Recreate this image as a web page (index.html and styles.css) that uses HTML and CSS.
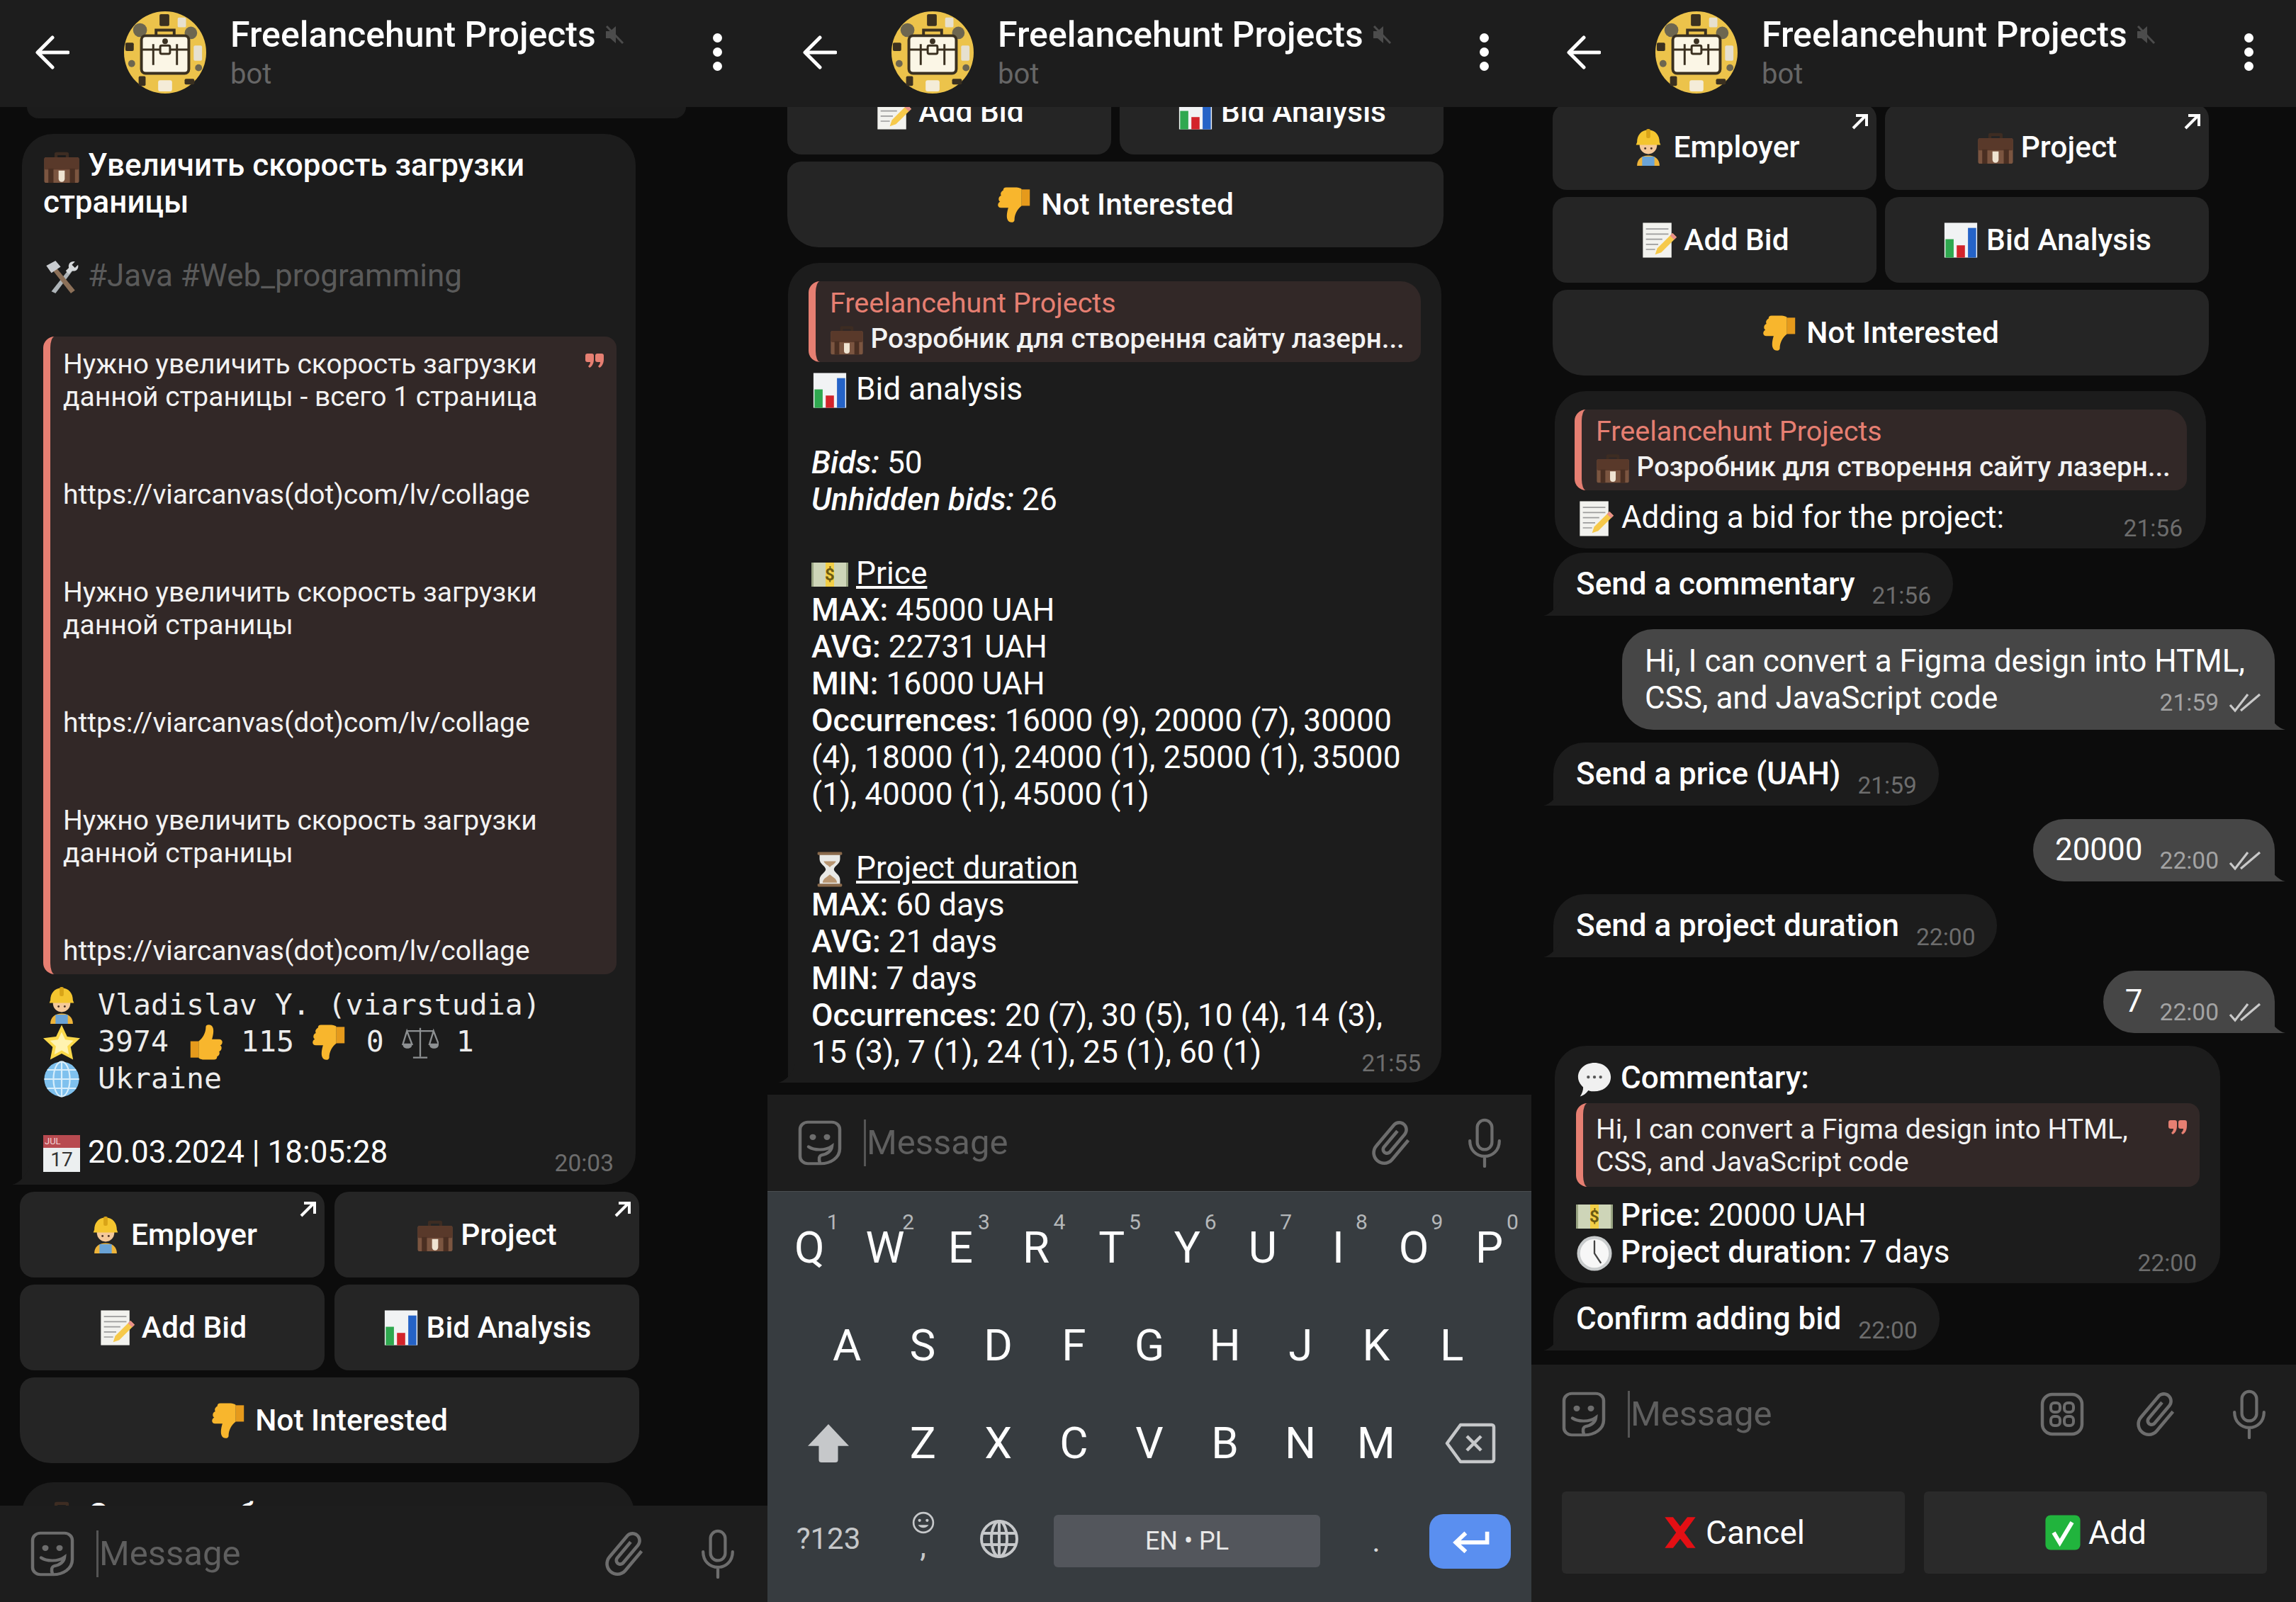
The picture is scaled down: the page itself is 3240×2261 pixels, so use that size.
FILE: index.html
```html
<!DOCTYPE html>
<html lang="en">
<head>
  <meta charset="UTF-8">
  <title>Freelancehunt Projects bot</title>
  <link rel="stylesheet" href="styles.css">
</head>
<body>
  <!-- shared emoji and icons -->
  <svg class="defs" aria-hidden="true">
    <symbol id="e-case" viewBox="0 0 36 36">
      <path d="M11 10V6a2 2 0 0 1 2-2h10a2 2 0 0 1 2 2v4h-3V7h-8v3z" fill="#3d2c22"/>
      <rect x="1" y="9" width="34" height="25" rx="2" fill="#7b5540"/>
      <rect x="1" y="9" width="34" height="12" rx="2" fill="#59392a"/>
      <rect x="5" y="20" width="5" height="14" fill="#4a2f22"/>
      <rect x="26" y="20" width="5" height="14" fill="#4a2f22"/>
      <path d="M15 22h6v8a3 3 0 0 1-6 0z" fill="#efe4d2"/>
    </symbol>
    <symbol id="e-worker" viewBox="0 0 36 36">
      <path d="M7 36c0-6 4-10 11-10s11 4 11 10z" fill="#eeb43a"/>
      <path d="M12 27h12v9H12z" fill="#6aa3d6"/>
      <circle cx="18" cy="16" r="8.500" fill="#f5c99a"/>
      <path d="M7 13c0-7 4-12 11-12s11 5 11 12l1 2.500H6z" fill="#f4c52f"/>
      <rect x="16" y="0" width="4" height="9" rx="1.500" fill="#d9a418"/>
      <circle cx="15" cy="19" r="1" fill="#4b3325"/><circle cx="21" cy="19" r="1" fill="#4b3325"/>
    </symbol>
    <symbol id="e-tools" viewBox="0 0 36 36">
      <path d="M8 32 27 8l3 2L12 34z" fill="#aeb4b8"/>
      <path d="M31 3c-4-1-7 2-6 6l-3 3 3 3 3-3c4 1 7-2 6-6l-3 3-3-3z" fill="#d5d8da"/>
      <path d="M27 34 9 11l3-3 19 23z" fill="#8c7058"/>
      <path d="M3 7l9-5 5 6-9 6z" fill="#c9ccd0"/>
    </symbol>
    <symbol id="e-star" viewBox="0 0 36 36">
      <path d="M18 1l5.400 11.400L36 14l-9.200 8.600L29.200 35 18 29l-11.200 6 2.400-12.400L0 14l12.600-1.600z" fill="#fbd94a"/>
      <path d="M18 8l3.500 7.400 8 1-5.900 5.600 1.500 8L18 26l-7.100 4 1.500-8-5.900-5.600 8-1z" fill="#fff3b0"/>
    </symbol>
    <symbol id="e-up" viewBox="0 0 36 36">
      <path d="M4 17h8v16H4z" fill="#e59a1c"/>
      <path d="M12 17c4-3 7-8 7-14 0-3 6-3 7 1 1 3 0 8-1 11h7c4 0 4 5 1 6 2 1 2 5-1 6 1 2 0 4-2 5 0 2-1 3-3 3H18c-3 0-6-1-6-2z" fill="#f8b62d"/>
    </symbol>
    <symbol id="e-down" viewBox="0 0 36 36">
      <use href="#e-up" transform="rotate(180 18 18)" width="36" height="36"/>
    </symbol>
    <symbol id="e-scales" viewBox="0 0 36 36">
      <g fill="none" stroke="#8d9092" stroke-width="1.600">
        <path d="M18 4v28M11 33h14M5 7h26"/>
        <path d="M5 7 1 20h9zM31 7l-4 13h9z"/>
      </g>
      <path d="M1 20h9c0 3-2 4-4.500 4S1 23 1 20zM27 20h9c0 3-2 4-4.500 4S27 23 27 20z" fill="#8d9092"/>
    </symbol>
    <symbol id="e-globe" viewBox="0 0 36 36">
      <circle cx="18" cy="18" r="17" fill="#7fc1ee"/>
      <g fill="none" stroke="#d8eefb" stroke-width="1.500">
        <ellipse cx="18" cy="18" rx="8" ry="17"/>
        <path d="M18 1v34M1 18h34M4 9h28M4 27h28"/>
      </g>
    </symbol>
    <symbol id="e-memo" viewBox="0 0 36 36">
      <rect x="3" y="1" width="28" height="34" fill="#f2f2ee"/>
      <path d="M6 7h22M6 12h22M6 17h16M6 22h12M6 27h9" stroke="#9c9c9c" stroke-width="1.200"/>
      <path d="M32 11l4 4-15 15-6 2 2-6z" fill="#f6c94a"/>
      <path d="M32 11l4 4-2.500 2.500-4-4z" fill="#e88f8a"/>
    </symbol>
    <symbol id="e-chart" viewBox="0 0 36 36">
      <rect x="2" y="1" width="32" height="34" fill="#f1f3f4"/>
      <rect x="3" y="17" width="8" height="18" fill="#2fa84f"/>
      <rect x="14" y="23" width="8" height="12" fill="#d3242b"/>
      <rect x="25" y="6" width="8" height="29" fill="#2563c7"/>
    </symbol>
    <symbol id="e-glass" viewBox="0 0 36 36">
      <path d="M8 3h20v5c0 5-6 7-6 10s6 5 6 10v5H8v-5c0-5 6-7 6-10s-6-5-6-10z" fill="#e9e9e6"/>
      <path d="M11 31c0-4 5-6 7-8 2 2 7 4 7 8zM12 10h12c-1 3-5 4-6 6-1-2-5-3-6-6z" fill="#b89672"/>
      <rect x="6" y="1" width="24" height="3" rx="1" fill="#8a6a4c"/>
      <rect x="6" y="32" width="24" height="3" rx="1" fill="#8a6a4c"/>
    </symbol>
    <symbol id="e-speech" viewBox="0 0 36 36">
      <path d="M18 2c9 0 16 6 16 14s-7 14-16 14c-2 0-4 0-6-1-2 3-5 5-8 6 2-3 3-6 3-9-3-3-5-6-5-10C2 8 9 2 18 2z" fill="#f0f0f0"/>
      <circle cx="12" cy="16" r="1.500" fill="#555"/><circle cx="18" cy="16" r="1.500" fill="#555"/><circle cx="24" cy="16" r="1.500" fill="#555"/>
    </symbol>
    <symbol id="e-clock" viewBox="0 0 36 36">
      <circle cx="18" cy="18" r="17" fill="#c9cccd"/>
      <circle cx="18" cy="18" r="14" fill="#f7f7f7"/>
      <path d="M18 6v12l6 9" fill="none" stroke="#444" stroke-width="1.600" stroke-linecap="round"/>
    </symbol>
    <symbol id="e-cross" viewBox="0 0 36 36">
      <path d="M3 3h8l7 9 7-9h8L22 18l11 15h-8l-7-9-7 9H3l11-15z" fill="#e40f14"/>
    </symbol>
    <symbol id="e-check" viewBox="0 0 36 36">
      <rect x="1" y="1" width="34" height="34" rx="5" fill="#21b43d"/>
      <path d="M9 18l6 10L27 8" fill="none" stroke="#fff" stroke-width="4"/>
    </symbol>

    <symbol id="i-back" viewBox="0 0 48 48">
      <path d="M46 24H5M24 3 3 24l21 21" fill="none" stroke="currentColor" stroke-width="5" stroke-linecap="round" stroke-linejoin="round"/>
    </symbol>
    <symbol id="i-mute" viewBox="0 0 28 28">
      <path d="M2 9h6l8-7v24l-8-7H2z" fill="currentColor"/>
      <path d="M3 2l23 24" stroke="currentColor" stroke-width="3"/>
    </symbol>
    <symbol id="i-smile" viewBox="0 0 62 70" preserveAspectRatio="none">
      <path d="M14 3h34a11 11 0 0 1 11 11v30C59 58 46 67 32 67H14A11 11 0 0 1 3 56V14A11 11 0 0 1 14 3z" fill="none" stroke="currentColor" stroke-width="4.500"/>
      <circle cx="21" cy="26" r="4.500" fill="currentColor"/><circle cx="41" cy="26" r="4.500" fill="currentColor"/>
      <path d="M15 41c8 6 24 6 33-1-1 10-10 13-15 14-3 1-4 6-2 12" fill="none" stroke="currentColor" stroke-width="4.500" stroke-linecap="round"/>
    </symbol>
    <symbol id="i-clip" viewBox="1 1 22 22">
      <path transform="rotate(40 12 12)" d="M16.500 6v11.500c0 2.210-1.790 4-4 4s-4-1.790-4-4V5c0-1.380 1.120-2.500 2.500-2.500s2.500 1.120 2.500 2.500v10.500c0 .55-.45 1-1 1s-1-.45-1-1V6H10v9.500c0 1.380 1.120 2.500 2.500 2.500s2.500-1.120 2.500-2.500V5c0-2.210-1.790-4-4-4S7 2.790 7 5v12.500c0 3.040 2.460 5.500 5.500 5.500s5.500-2.460 5.500-5.500V6h-1.500z" fill="currentColor"/>
    </symbol>
    <symbol id="i-mic" viewBox="0 0 50 74">
      <rect x="14" y="3" width="22" height="44" rx="11" fill="none" stroke="currentColor" stroke-width="4.500"/>
      <path d="M3 34c0 14 10 23 22 23s22-9 22-23M25 57v15" fill="none" stroke="currentColor" stroke-width="4.500" stroke-linecap="round"/>
    </symbol>
    <symbol id="i-menu" viewBox="0 0 62 62">
      <rect x="3" y="3" width="56" height="56" rx="14" fill="none" stroke="currentColor" stroke-width="4.500"/>
      <rect x="15" y="15" width="13" height="13" rx="5" fill="none" stroke="currentColor" stroke-width="4"/>
      <rect x="34" y="15" width="13" height="13" rx="5" fill="none" stroke="currentColor" stroke-width="4"/>
      <rect x="15" y="34" width="13" height="13" rx="5" fill="none" stroke="currentColor" stroke-width="4"/>
      <rect x="34" y="34" width="13" height="13" rx="5" fill="none" stroke="currentColor" stroke-width="4"/>
    </symbol>
    <symbol id="i-ext" viewBox="0 0 24 24">
      <path d="M3 21 20 4M7 3h15v15" fill="none" stroke="currentColor" stroke-width="4"/>
    </symbol>
    <symbol id="i-ticks" viewBox="0 0 46 28">
      <path d="M2 17l7 8L27 2M17 25 44 2" fill="none" stroke="currentColor" stroke-width="3.200"/>
    </symbol>
    <symbol id="i-quote" viewBox="0 0 26 20">
      <path d="M3 0h6a3 3 0 0 1 3 3v5c0 5-2 10-6 12l-2-2c2-2 3-4 3-6H3a3 3 0 0 1-3-3V3a3 3 0 0 1 3-3zM17 0h6a3 3 0 0 1 3 3v5c0 5-2 10-6 12l-2-2c2-2 3-4 3-6h-4a3 3 0 0 1-3-3V3a3 3 0 0 1 3-3z" fill="currentColor"/>
    </symbol>
    <symbol id="i-shift" viewBox="0 0 60 56" preserveAspectRatio="none">
      <path d="M30 0 60 32H44v20a4 4 0 0 1-4 4H20a4 4 0 0 1-4-4V32H0z" fill="currentColor"/>
    </symbol>
    <symbol id="i-del" viewBox="0 0 72 58">
      <path d="M22 3h44a3 3 0 0 1 3 3v46a3 3 0 0 1-3 3H22L3 29z" fill="none" stroke="currentColor" stroke-width="4.500" stroke-linejoin="round"/>
      <path d="M31 19l20 20M51 19 31 39" stroke="currentColor" stroke-width="4.500"/>
    </symbol>
    <symbol id="i-globe" viewBox="0 0 56 56">
      <g fill="none" stroke="currentColor" stroke-width="4">
        <circle cx="28" cy="28" r="25"/><ellipse cx="28" cy="28" rx="11" ry="25"/>
        <path d="M28 3v50M4 20h48M4 36h48"/>
      </g>
    </symbol>
    <symbol id="i-emoji" viewBox="0 0 30 30">
      <circle cx="15" cy="15" r="13" fill="none" stroke="currentColor" stroke-width="2.500"/>
      <circle cx="10" cy="12" r="2" fill="currentColor"/><circle cx="20" cy="12" r="2" fill="currentColor"/>
      <path d="M8 18c3 5 11 5 14 0z" fill="currentColor"/>
    </symbol>
    <symbol id="i-enter" viewBox="0 0 54 36">
      <path d="M52 4v16H7M20 6 5 20l15 14" fill="none" stroke="currentColor" stroke-width="6"/>
    </symbol>
    <symbol id="i-logo" viewBox="0 0 120 120">
      <circle cx="60" cy="60" r="59" fill="#ecc34b"/>
      <g fill="#3a3020">
        <rect x="52" y="5" width="14" height="17" rx="2"/><rect x="78" y="10" width="12" height="14" rx="2" fill="#e6e0cf"/>
        <circle cx="24" cy="28" r="10" fill="#6d6650"/><circle cx="97" cy="32" r="9" fill="#6d6650"/>
        <rect x="3" y="46" width="12" height="12" rx="2"/><rect x="101" y="50" width="12" height="22" rx="2" fill="#e6e0cf"/>
        <circle cx="12" cy="76" r="5" fill="#6d6650"/><circle cx="108" cy="82" r="5" fill="#6d6650"/>
        <rect x="22" y="94" width="10" height="14" rx="2"/><rect x="88" y="98" width="14" height="8" rx="2"/>
        <rect x="50" y="100" width="20" height="16" rx="3" fill="#f4ecd8"/>
      </g>
      <path d="M47 36v-8h26v8" fill="none" stroke="#3a3020" stroke-width="4"/>
      <rect x="26" y="36" width="68" height="54" rx="6" fill="#fbf6e6" stroke="#3a3020" stroke-width="4"/>
      <path d="M26 56h68M43 48v30M77 48v30" fill="none" stroke="#3a3020" stroke-width="3"/>
      <rect x="53" y="50" width="14" height="12" rx="2" fill="#fbf6e6" stroke="#3a3020" stroke-width="3"/>
      <circle cx="60" cy="44" r="4" fill="#3a3020"/>
    </symbol>
  </svg>

  <div class="screens">

    <!-- left: project card -->
    <section class="phone">
      <header class="topbar">
        <svg class="back"><use href="#i-back"/></svg>
        <svg class="avatar"><use href="#i-logo"/></svg>
        <div class="who">
          <div class="name">Freelancehunt Projects <svg class="mute"><use href="#i-mute"/></svg></div>
          <div class="status">bot</div>
        </div>
        <div class="dots"><i></i><i></i><i></i></div>
      </header>

      <div class="chat chat-top">
        <div class="stub"></div>
        <div class="bubble card tail">
          <div class="line semi"><svg class="emo"><use href="#e-case"/></svg> Увеличить скорость загрузки<br>страницы</div>
          <div class="line blank"></div>
          <div class="line tags"><svg class="emo"><use href="#e-tools"/></svg> #Java #Web_programming</div>
          <div class="line blank"></div>
          <div class="quote quote-long"><svg class="q-mark"><use href="#i-quote"/></svg>Нужно увеличить скорость загрузки
данной страницы - всего 1 страница


https://viarcanvas(dot)com/lv/collage


Нужно увеличить скорость загрузки
данной страницы


https://viarcanvas(dot)com/lv/collage


Нужно увеличить скорость загрузки
данной страницы


https://viarcanvas(dot)com/lv/collage</div>
          <div class="mono">
            <div class="line"><svg class="emo"><use href="#e-worker"/></svg> Vladislav Y. (viarstudia)</div>
            <div class="line"><svg class="emo"><use href="#e-star"/></svg> 3974 <svg class="emo"><use href="#e-up"/></svg> 115 <svg class="emo"><use href="#e-down"/></svg> 0 <svg class="emo"><use href="#e-scales"/></svg> 1</div>
            <div class="line"><svg class="emo"><use href="#e-globe"/></svg> Ukraine</div>
          </div>
          <div class="line blank"></div>
          <div class="last-row">
            <div class="line"><span class="cal"><span class="cal-mon">JUL</span><span class="cal-day">17</span></span> 20.03.2024 | 18:05:28</div>
            <span class="time">20:03</span>
          </div>
        </div>
        <div class="keys keys-narrow">
          <div class="key"><svg class="emo"><use href="#e-worker"/></svg> Employer<svg class="ext"><use href="#i-ext"/></svg></div>
          <div class="key"><svg class="emo"><use href="#e-case"/></svg> Project<svg class="ext"><use href="#i-ext"/></svg></div>
          <div class="key"><svg class="emo"><use href="#e-memo"/></svg> Add Bid</div>
          <div class="key"><svg class="emo"><use href="#e-chart"/></svg> Bid Analysis</div>
          <div class="key key-wide"><svg class="emo"><use href="#e-down"/></svg> Not Interested</div>
        </div>
        <div class="bubble next"><div class="line semi"><svg class="emo"><use href="#e-case"/></svg> Создание бота заказать для</div></div>
      </div>

      <div class="composer">
        <div class="inputrow">
          <svg class="ic-smile"><use href="#i-smile"/></svg>
          <span class="caret"></span><span class="placeholder">Message</span>
          <svg class="ic-clip"><use href="#i-clip"/></svg>
          <svg class="ic-mic"><use href="#i-mic"/></svg>
        </div>
      </div>
    </section>

    <!-- middle: bid analysis with keyboard -->
    <section class="phone">
      <header class="topbar">
        <svg class="back"><use href="#i-back"/></svg>
        <svg class="avatar"><use href="#i-logo"/></svg>
        <div class="who">
          <div class="name">Freelancehunt Projects <svg class="mute"><use href="#i-mute"/></svg></div>
          <div class="status">bot</div>
        </div>
        <div class="dots"><i></i><i></i><i></i></div>
      </header>

      <div class="chat chat-mid">
        <div class="keys">
          <div class="key"><svg class="emo"><use href="#e-memo"/></svg> Add Bid</div>
          <div class="key"><svg class="emo"><use href="#e-chart"/></svg> Bid Analysis</div>
          <div class="key key-wide"><svg class="emo"><use href="#e-down"/></svg> Not Interested</div>
        </div>
        <div class="bubble analysis tail">
          <div class="reply">
            <div class="reply-from">Freelancehunt Projects</div>
            <div class="reply-text"><svg class="emo emo-sm"><use href="#e-case"/></svg> Розробник для створення сайту лазерн...</div>
          </div>
          <div class="stats">
            <div class="line"><svg class="emo"><use href="#e-chart"/></svg> Bid analysis</div>
            <div class="line blank"></div>
            <div class="line"><em>Bids:</em> 50</div>
            <div class="line"><em>Unhidden bids:</em> 26</div>
            <div class="line blank"></div>
            <div class="line"><span class="bill">$</span> <u>Price</u></div>
            <div class="line"><b>MAX:</b> 45000 UAH</div>
            <div class="line"><b>AVG:</b> 22731 UAH</div>
            <div class="line"><b>MIN:</b> 16000 UAH</div>
            <div class="line"><b>Occurrences:</b> 16000 (9), 20000 (7), 30000<br>(4), 18000 (1), 24000 (1), 25000 (1), 35000<br>(1), 40000 (1), 45000 (1)</div>
            <div class="line blank"></div>
            <div class="line"><svg class="emo"><use href="#e-glass"/></svg> <u>Project duration</u></div>
            <div class="line"><b>MAX:</b> 60 days</div>
            <div class="line"><b>AVG:</b> 21 days</div>
            <div class="line"><b>MIN:</b> 7 days</div>
            <div class="last-row">
              <div class="line line-over"><b>Occurrences:</b> 20 (7), 30 (5), 10 (4), 14 (3),<br>15 (3), 7 (1), 24 (1), 25 (1), 60 (1)</div>
              <span class="time">21:55</span>
            </div>
          </div>
        </div>
      </div>

      <div class="composer">
        <div class="inputrow">
          <svg class="ic-smile"><use href="#i-smile"/></svg>
          <span class="caret"></span><span class="placeholder">Message</span>
          <svg class="ic-clip"><use href="#i-clip"/></svg>
          <svg class="ic-mic"><use href="#i-mic"/></svg>
        </div>
      </div>

      <div class="keyboard">
        <div class="kb-row">
          <span class="kb-key">Q<sup>1</sup></span><span class="kb-key">W<sup>2</sup></span><span class="kb-key">E<sup>3</sup></span><span class="kb-key">R<sup>4</sup></span><span class="kb-key">T<sup>5</sup></span><span class="kb-key">Y<sup>6</sup></span><span class="kb-key">U<sup>7</sup></span><span class="kb-key">I<sup>8</sup></span><span class="kb-key">O<sup>9</sup></span><span class="kb-key">P<sup>0</sup></span>
        </div>
        <div class="kb-row kb-row-home">
          <span class="kb-key">A</span><span class="kb-key">S</span><span class="kb-key">D</span><span class="kb-key">F</span><span class="kb-key">G</span><span class="kb-key">H</span><span class="kb-key">J</span><span class="kb-key">K</span><span class="kb-key">L</span>
        </div>
        <div class="kb-row">
          <span class="kb-key kb-side"><svg class="kb-shift"><use href="#i-shift"/></svg></span>
          <span class="kb-key">Z</span><span class="kb-key">X</span><span class="kb-key">C</span><span class="kb-key">V</span><span class="kb-key">B</span><span class="kb-key">N</span><span class="kb-key">M</span>
          <span class="kb-key kb-side"><svg class="kb-del"><use href="#i-del"/></svg></span>
        </div>
        <div class="kb-bottom">
          <span class="kb-sym">?123</span>
          <span class="kb-comma"><svg class="kb-emoji"><use href="#i-emoji"/></svg><span>,</span></span>
          <span class="kb-cell"><svg class="kb-globe"><use href="#i-globe"/></svg></span>
          <span class="kb-space">EN • PL</span>
          <span class="kb-dot">.</span>
          <span class="kb-enter"><svg><use href="#i-enter"/></svg></span>
        </div>
      </div>
    </section>

    <!-- right: adding a bid -->
    <section class="phone">
      <header class="topbar">
        <svg class="back"><use href="#i-back"/></svg>
        <svg class="avatar"><use href="#i-logo"/></svg>
        <div class="who">
          <div class="name">Freelancehunt Projects <svg class="mute"><use href="#i-mute"/></svg></div>
          <div class="status">bot</div>
        </div>
        <div class="dots"><i></i><i></i><i></i></div>
      </header>

      <div class="chat chat-right">
        <div class="keys">
          <div class="key"><svg class="emo"><use href="#e-worker"/></svg> Employer<svg class="ext"><use href="#i-ext"/></svg></div>
          <div class="key"><svg class="emo"><use href="#e-case"/></svg> Project<svg class="ext"><use href="#i-ext"/></svg></div>
          <div class="key"><svg class="emo"><use href="#e-memo"/></svg> Add Bid</div>
          <div class="key"><svg class="emo"><use href="#e-chart"/></svg> Bid Analysis</div>
          <div class="key key-wide"><svg class="emo"><use href="#e-down"/></svg> Not Interested</div>
        </div>

        <div class="bubble adding">
          <div class="reply">
            <div class="reply-from">Freelancehunt Projects</div>
            <div class="reply-text"><svg class="emo emo-sm"><use href="#e-case"/></svg> Розробник для створення сайту лазерн...</div>
          </div>
          <div class="last-row">
            <div class="line"><svg class="emo"><use href="#e-memo"/></svg> Adding a bid for the project:</div>
            <span class="time">21:56</span>
          </div>
        </div>

        <div class="bubble short tail join">
          <span class="line semi">Send a commentary</span><span class="time">21:56</span>
        </div>
        <div class="bubble out out-long tail-out">
          <div class="line">Hi, I can convert a Figma design into HTML,<br>CSS, and JavaScript code</div>
          <div class="stamp"><span class="time">21:59</span><svg class="ticks"><use href="#i-ticks"/></svg></div>
        </div>
        <div class="bubble short tail gap-in">
          <span class="line semi">Send a price (UAH)</span><span class="time">21:59</span>
        </div>
        <div class="bubble out out-short tail-out">
          <span class="line">20000</span>
          <div class="stamp"><span class="time">22:00</span><svg class="ticks"><use href="#i-ticks"/></svg></div>
        </div>
        <div class="bubble short tail gap-in">
          <span class="line semi">Send a project duration</span><span class="time">22:00</span>
        </div>
        <div class="bubble out out-short tail-out">
          <span class="line">7</span>
          <div class="stamp"><span class="time">22:00</span><svg class="ticks"><use href="#i-ticks"/></svg></div>
        </div>

        <div class="bubble comment">
          <div class="line semi"><svg class="emo"><use href="#e-speech"/></svg> Commentary:</div>
          <div class="quote quote-short"><svg class="q-mark"><use href="#i-quote"/></svg>Hi, I can convert a Figma design into HTML,
CSS, and JavaScript code</div>
          <div class="line"><span class="bill">$</span> <b>Price:</b> 20000 UAH</div>
          <div class="last-row">
            <div class="line"><svg class="emo"><use href="#e-clock"/></svg> <b>Project duration:</b> 7 days</div>
            <span class="time">22:00</span>
          </div>
        </div>
        <div class="bubble short tail join">
          <span class="line semi">Confirm adding bid</span><span class="time">22:00</span>
        </div>
      </div>

      <div class="composer">
        <div class="inputrow inputrow-tall">
          <svg class="ic-smile"><use href="#i-smile"/></svg>
          <span class="caret"></span><span class="placeholder">Message</span>
          <svg class="ic-menu"><use href="#i-menu"/></svg>
          <svg class="ic-clip ic-clip-near"><use href="#i-clip"/></svg>
          <svg class="ic-mic"><use href="#i-mic"/></svg>
        </div>
        <div class="reply-keys">
          <div class="reply-key"><svg class="emo"><use href="#e-cross"/></svg> Cancel</div>
          <div class="reply-key"><svg class="emo"><use href="#e-check"/></svg> Add</div>
        </div>
      </div>
    </section>

  </div>
</body>
</html>
```

FILE: styles.css
```css
:root {
  --chat-bg: #0c0c0c;
  --panel: #1d1d1d;
  --bubble: #1c1c1c;
  --key: #252525;
  --out: #464646;
  --quote-bg: #322827;
  --accent: #e67f72;
  --muted: #6d6d6d;
  --kb-bg: #373c40;
}

* {
  margin: 0;
  padding: 0;
  box-sizing: border-box;
}

body {
  width: 3240px;
  height: 2261px;
  overflow: hidden;
  background: var(--chat-bg);
  color: #fff;
  font-family: Roboto, "Noto Sans", sans-serif;
  font-size: 44px;
  line-height: 52px;
}

.defs {
  position: absolute;
  width: 0;
  height: 0;
}

.screens {
  display: grid;
  grid-template-columns: 1083px 1078px 1079px;
  height: 100%;
}

.phone {
  display: flex;
  flex-direction: column;
  height: 2261px;
  overflow: hidden;
  min-width: 0;
}

/* header */
.topbar {
  flex: none;
  display: flex;
  align-items: center;
  height: 151px;
  padding: 0 0 4px 50px;
  background: var(--panel);
  position: relative;
  z-index: 1;
}

.back {
  width: 48px;
  height: 48px;
  color: #fff;
}

.avatar {
  width: 118px;
  height: 118px;
  margin-left: 76px;
}

.who {
  margin-left: 33px;
}

.name {
  display: flex;
  align-items: center;
  gap: 12px;
  font-size: 50px;
  font-weight: 500;
  line-height: 62px;
  white-space: nowrap;
}

.mute {
  width: 28px;
  height: 28px;
  color: #4c4c4c;
}

.status {
  color: #666;
  font-size: 40px;
  line-height: 50px;
}

.dots {
  display: flex;
  flex-direction: column;
  gap: 7px;
  margin-left: auto;
  margin-right: 60px;
}

.phone:first-child .dots {
  margin-right: 64px;
}

.dots i {
  width: 13px;
  height: 13px;
  border-radius: 50%;
  background: #fff;
}

/* chat column */
.chat {
  flex: 1;
  min-height: 0;
  overflow: hidden;
  display: flex;
  flex-direction: column;
  justify-content: flex-end;
  background: var(--chat-bg);
}

.chat-top {
  justify-content: flex-start;
  padding-left: 28px;
}

.chat-mid {
  padding: 0 0 17px 28px;
}

.chat-right {
  padding: 0 30px 20px 30px;
}

.bubble {
  flex: none;
  position: relative;
  background: var(--bubble);
  border-radius: 44px;
}

.line {
  display: block;
}

.line-over {
  flex: none;
  margin-right: -40px;
}

.blank {
  height: 52px;
}

.semi {
  font-weight: 500;
}

.line b {
  font-weight: 500;
}

.tags {
  color: #5a5a5a;
}

.emo {
  width: 52px;
  height: 52px;
  margin: -8px 0;
  vertical-align: -5px;
}

.emo-sm {
  width: 48px;
  height: 48px;
  vertical-align: -4px;
}

/* emoji with lettering on them stay real text */
.cal {
  display: inline-block;
  overflow: hidden;
  width: 52px;
  height: 52px;
  margin: -8px 0;
  vertical-align: -5px;
  background: #eceff0;
  color: #333;
  text-align: center;
}

.cal-mon {
  display: block;
  height: 18px;
  padding-left: 2px;
  background: #b84a50;
  color: #f3d6d6;
  font-size: 13px;
  line-height: 18px;
  text-align: left;
}

.cal-day {
  display: block;
  font-size: 28px;
  line-height: 34px;
}

.bill {
  display: inline-block;
  overflow: hidden;
  width: 52px;
  height: 34px;
  vertical-align: -4px;
  background: linear-gradient(90deg, #9aa583 0 6%, #ced5b8 6% 38%, #f2cf47 38% 62%, #ced5b8 62% 94%, #9aa583 94%);
  color: #6b5a12;
  font-size: 24px;
  font-weight: 700;
  line-height: 34px;
  text-align: center;
}

.time {
  flex: none;
  color: var(--muted);
  font-size: 33.500px;
  line-height: 36px;
  white-space: nowrap;
}

.last-row {
  display: flex;
  justify-content: space-between;
  align-items: flex-end;
}

.last-row .time {
  margin-bottom: -8px;
}

/* left card */
.stub {
  flex: none;
  width: 930px;
  height: 16px;
  margin: 0 0 22px 10px;
  background: var(--bubble);
  border-radius: 0 0 44px 44px;
}

.card {
  width: 866px;
  margin-left: 3px;
  padding: 18px 31px 20px 30px;
  border-bottom-left-radius: 8px;
}

.quote {
  position: relative;
  background: var(--quote-bg);
  border-left: 10px solid var(--accent);
  border-radius: 16px;
  color: #f2f2f2;
  font-size: 39px;
  line-height: 46px;
  white-space: pre-line;
}

.quote-long {
  height: 900px;
  margin-top: 8px;
  margin-right: -4px;
  padding: 16px 20px 9px 18px;
}

.q-mark {
  position: absolute;
  top: 24px;
  right: 18px;
  width: 26px;
  height: 20px;
  color: var(--accent);
}

.mono {
  margin-top: 17px;
  font-family: "DejaVu Sans Mono", "Liberation Mono", monospace;
  font-size: 41.500px;
  color: #ececec;
}

/* inline keyboard */
.keys {
  flex: none;
  display: grid;
  grid-template-columns: 457px 457px;
  column-gap: 12px;
  row-gap: 10px;
  margin-bottom: 22px;
}

.keys-narrow {
  grid-template-columns: 430px 430px;
  column-gap: 14px;
  row-gap: 10px;
  margin-top: 10px;
  margin-bottom: 27px;
}

.key {
  position: relative;
  height: 121px;
  display: flex;
  align-items: center;
  justify-content: center;
  gap: 10px;
  background: var(--key);
  border-radius: 20px;
  font-weight: 500;
  font-size: 42.500px;
}

.key-wide {
  grid-column: 1 / -1;
  border-radius: 20px 20px 44px 44px;
}

.ext {
  position: absolute;
  top: 13px;
  right: 12px;
  width: 24px;
  height: 24px;
  color: #fff;
}

.next {
  width: 864px;
  margin-left: 3px;
  padding: 20px 30px;
}

/* replies */
.reply {
  background: var(--quote-bg);
  border-left: 10px solid var(--accent);
  border-radius: 16px 28px 16px 16px;
  padding: 6px 20px 8px 20px;
}

.reply-from {
  color: var(--accent);
  font-size: 39.500px;
  line-height: 50px;
}

.reply-text {
  color: #f2f2f2;
  font-size: 38.600px;
  font-weight: 500;
  line-height: 50px;
  white-space: nowrap;
}

.analysis {
  width: 922px;
  margin-left: 1px;
  padding: 26px 29px 17px 29px;
  border-bottom-left-radius: 8px;
}

.analysis .reply {
  margin-bottom: 12px;
}

.stats {
  padding-left: 4px;
  font-size: 44.300px;
}

.stats em {
  font-style: italic;
  font-weight: 500;
}

.adding {
  width: 919px;
  margin-left: 3px;
  padding: 26px 33px 18px 28px;
}

.adding .reply {
  margin-right: -6px;
  margin-bottom: 12px;
}

.adding .last-row .line {
  margin-left: 3px;
}

/* right column bubbles */
.short {
  align-self: flex-start;
  display: flex;
  align-items: flex-end;
  gap: 24px;
  margin-left: 1px;
  padding: 18px 31px 19px 32px;
  border-bottom-left-radius: 8px;
}

.short .time {
  margin-bottom: -9px;
}

.join {
  margin-top: 6px;
}

.gap-in {
  margin-top: 18px;
}

.tail::before {
  content: "";
  position: absolute;
  left: -14px;
  bottom: 0;
  width: 24px;
  height: 26px;
  background: inherit;
  clip-path: path("M24 0 V26 H0 C10 24 20 14 24 0 Z");
}

.out {
  align-self: flex-end;
  background: var(--out);
  margin-top: 19px;
  border-bottom-right-radius: 8px;
}

.out .time {
  color: #a3a3a3;
}

.tail-out::after {
  content: "";
  position: absolute;
  right: -15px;
  bottom: 0;
  width: 24px;
  height: 26px;
  background: inherit;
  clip-path: path("M0 0 V26 H24 C14 24 4 14 0 0 Z");
}

.stamp {
  display: flex;
  align-items: center;
  gap: 14px;
}

.ticks {
  width: 46px;
  height: 28px;
  color: #c9c9c9;
}

.out-long {
  display: flex;
  flex-direction: column;
  padding: 19px 19px 20px 32px;
}

.out-long .line {
  padding-right: 23px;
}

.out-long .stamp {
  align-self: flex-end;
  margin-top: -37px;
}

.out-short {
  display: flex;
  align-items: flex-end;
  gap: 24px;
  padding: 17px 19px 19px 31px;
}

.out-short .stamp {
  margin-bottom: -8px;
}

.comment {
  width: 939px;
  margin-top: 18px;
  margin-left: 3px;
  padding: 19px 33px 18px 30px;
}

.quote-short {
  margin: 10px -4px 14px 0;
  padding: 14px 20px 12px 18px;
}

/* message input */
.composer {
  flex: none;
  background: var(--panel);
  position: relative;
}

.inputrow {
  display: flex;
  align-items: center;
  height: 136px;
  padding: 0 42px 0 43px;
  color: var(--muted);
}

.phone:first-child .inputrow {
  padding-right: 46px;
}

.inputrow-tall {
  height: 140px;
}

.ic-smile {
  width: 62px;
  height: 64px;
}

.caret {
  width: 3px;
  height: 66px;
  margin-left: 31px;
  background: #555;
}

.placeholder {
  margin-left: 1px;
  font-size: 49px;
  color: #5f5f5f;
}

.ic-menu {
  width: 62px;
  height: 62px;
  margin-left: auto;
}

.ic-clip {
  width: 68px;
  height: 68px;
  margin-left: auto;
}

.ic-clip-near {
  margin-left: 67px;
}

.ic-mic {
  width: 48px;
  height: 70px;
  margin-left: 74px;
}

.reply-keys {
  display: grid;
  grid-template-columns: 484px 484px;
  column-gap: 27px;
  padding: 39px 0 40px 43px;
}

.reply-key {
  height: 116px;
  display: flex;
  align-items: center;
  justify-content: center;
  gap: 10px;
  background: #2a2a2a;
  border-radius: 6px;
  font-size: 46px;
}

/* system keyboard */
.keyboard {
  flex: none;
  height: 580px;
  padding: 10px 6px 0;
  background: var(--kb-bg);
  border-top: 1px solid #4a4d50;
}

.kb-row {
  display: flex;
  height: 138px;
}

.kb-row-home {
  padding: 0 53px;
}

.kb-key {
  position: relative;
  flex: 1;
  display: flex;
  align-items: center;
  justify-content: center;
  font-size: 62px;
  line-height: 1;
}

.kb-key sup {
  position: absolute;
  top: 15px;
  right: 12px;
  color: #b4b7b9;
  font-size: 30px;
  line-height: 36px;
}

.kb-side {
  flex: 1.5;
}

.kb-shift {
  width: 58px;
  height: 54px;
  color: #c6c8ca;
}

.kb-del {
  width: 72px;
  height: 58px;
  color: #c6c8ca;
}

.kb-bottom {
  display: grid;
  grid-template-columns: 160px 107px 107px 400px 158px 1fr;
  align-items: center;
  height: 138px;
}

.kb-sym {
  margin-top: -6px;
  text-align: center;
  color: #c6c8ca;
  font-size: 42px;
}

.kb-comma {
  display: flex;
  flex-direction: column;
  align-items: center;
  margin-top: -22px;
  color: #c6c8ca;
  font-size: 44px;
  line-height: 30px;
}

.kb-emoji {
  width: 32px;
  height: 36px;
  color: #c6c8ca;
}

.kb-cell {
  display: flex;
  justify-content: center;
  margin-top: -6px;
}

.kb-globe {
  width: 56px;
  height: 56px;
  color: #c6c8ca;
}

.kb-space {
  justify-self: end;
  width: 376px;
  height: 74px;
  background: #53565c;
  border-radius: 6px;
  text-align: center;
  font-size: 36px;
  line-height: 74px;
  color: #e8e8e8;
}

.kb-dot {
  text-align: center;
  font-size: 44px;
  color: #d8d8d8;
}

.kb-enter {
  display: flex;
  align-items: center;
  justify-content: center;
  width: 115px;
  height: 77px;
  margin-left: -4px;
  background: #5a8ff0;
  border-radius: 20px;
  color: #fff;
}

.kb-enter svg {
  width: 54px;
  height: 34px;
}
```
